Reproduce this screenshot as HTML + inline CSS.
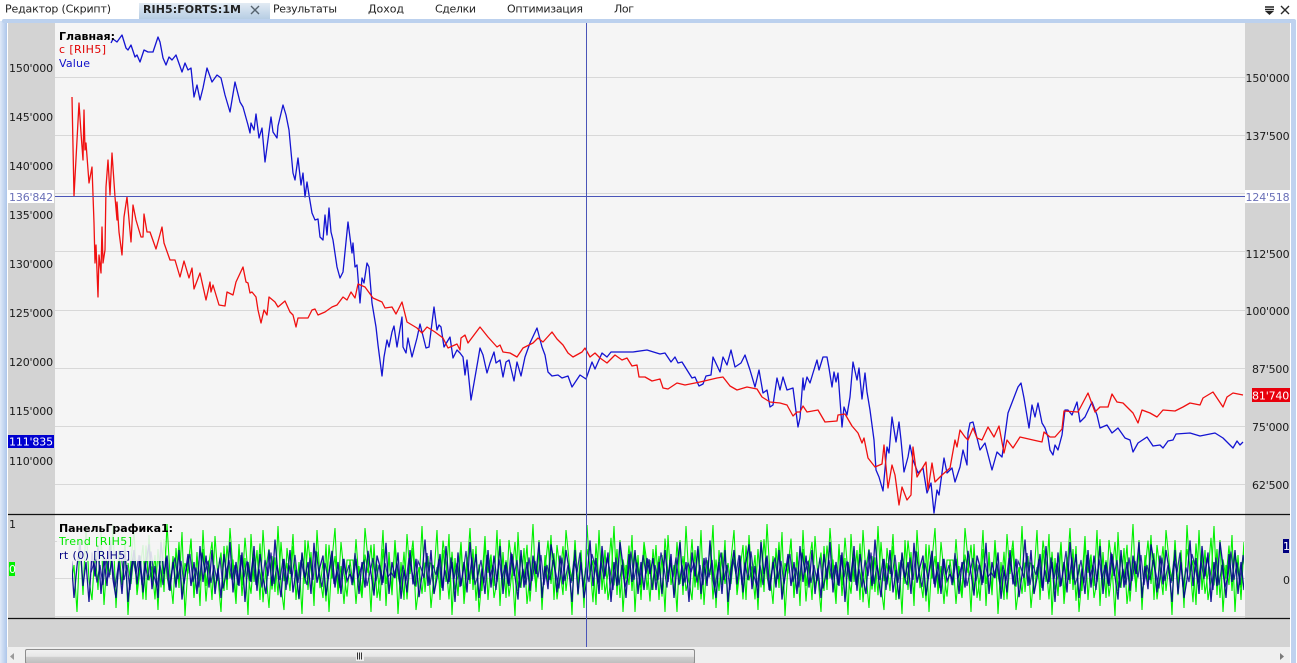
<!DOCTYPE html>
<html><head><meta charset="utf-8"><style>
html,body{margin:0;padding:0;background:#fff;width:1297px;height:663px;overflow:hidden}
svg{display:block}
text{font-family:"DejaVu Sans","Liberation Sans",sans-serif;font-size:11px;fill:#1a1a1a}
.t{fill:#222}
.a{letter-spacing:-.15px}
</style></head><body>
<svg width="1297" height="663" viewBox="0 0 1297 663" xmlns="http://www.w3.org/2000/svg">
<defs>
<linearGradient id="tab" x1="0" y1="0" x2="0" y2="1"><stop offset="0" stop-color="#e2ebf4"/><stop offset="1" stop-color="#b4cbe2"/></linearGradient>
<linearGradient id="side" x1="0" y1="0" x2="1" y2="0"><stop offset="0" stop-color="#dfe9f8"/><stop offset="1" stop-color="#adc6ea"/></linearGradient>
<linearGradient id="thumb" x1="0" y1="0" x2="0" y2="1"><stop offset="0" stop-color="#f2f2f2"/><stop offset=".5" stop-color="#e6e6e6"/><stop offset=".55" stop-color="#cfcfcf"/><stop offset="1" stop-color="#bdbdbd"/></linearGradient>
<clipPath id="lo"><rect x="72" y="516" width="1172" height="102"/></clipPath>
<polyline id="g" fill="none" vector-effect="non-scaling-stroke" points="0,560 3,590 6,545 9,600 12,555 15,612 18,535 21,585 24,565 27,612 30,540 33,595 36,526 39,580 42,600 45,550 48,590 51,530 54,605 57,560 60,575 63,525 66,608 69,550 72,585 75,540 78,615 81,560 84,530 87,595 90,570 93,545 96,600 99,535 102,582 105,555 108,610 111,540 114,592 117,524 120,575 123,604 126,548 129,588 132,532 135,616 138,565 141,540 144,598 147,552 150,606 153,530 156,586 159,560 162,600 165,536 168,578 171,612 174,546 177,590 180,528 183,570 186,604 189,544 192,596 195,558 198,615 201,534 204,582 207,550 210,600 213,530 216,574 219,608 222,556 225,592 228,526 231,586 234,610 237,548 240,574 243,534 246,600 249,562 252,614 255,540 258,590 261,552 264,606 267,530 270,578 273,598 276,544 279,612 282,560 285,528 288,594 291,566 294,604 297,560 300,560"/>
<polyline id="n" fill="none" vector-effect="non-scaling-stroke" points="0,575 3,555 6,595 9,560 12,600 15,545 18,585 21,550 24,605 27,565 30,535 33,590 36,560 39,610 42,548 45,578 48,540 51,600 54,555 57,590 60,533 63,582 66,605 69,560 72,600 75,545 78,610 81,570 84,545 87,588 90,552 93,598 96,560 99,538 102,594 105,565 108,605 111,535 114,575 117,552 120,596 123,560 126,592 129,545 132,607 135,578 138,550 141,590 144,560 147,600 150,540 153,585 156,552 159,592 162,545 165,600 168,568 171,605 174,550 177,582 180,535 183,598 186,560 189,590 192,548 195,610 198,560 201,585 204,540 207,596 210,550 213,580 216,600 219,545 222,590 225,532 228,576 231,604 234,556 237,588 240,545 243,598 246,570 249,606 252,548 255,580 258,560 261,600 264,536 267,586 270,566 273,552 276,602 279,574 282,546 285,592 288,560 291,600 294,556 297,584 300,575"/>
</defs>

<rect width="1297" height="663" fill="#fff"/>
<!-- tab bar -->
<rect x="139" y="3" width="131" height="17" fill="url(#tab)"/>
<text x="5" y="12.5" class="t" textLength="106" lengthAdjust="spacing">Редактор (Скрипт)</text>
<text x="143" y="13" style="font-weight:bold" class="t" textLength="98" lengthAdjust="spacing">RIH5:FORTS:1M</text>
<path d="M251 6l8 8M259 6l-8 8" stroke="#56636f" stroke-width="1.4" fill="none"/>
<text x="273" y="12.5" class="t" textLength="64" lengthAdjust="spacing">Результаты</text>
<text x="368" y="12.5" class="t" textLength="36" lengthAdjust="spacing">Доход</text>
<text x="435" y="12.5" class="t" textLength="41" lengthAdjust="spacing">Сделки</text>
<text x="507" y="12.5" class="t" textLength="76" lengthAdjust="spacing">Оптимизация</text>
<text x="614" y="12.5" class="t" textLength="20" lengthAdjust="spacing">Лог</text>
<path d="M1265 7h9M1265 9.500h9" stroke="#222" stroke-width="1.500"/><path d="M1265 11h9l-4.500 4z" fill="#222"/>
<path d="M1281 6l8 8M1289 6l-8 8" stroke="#2a2a2a" stroke-width="1.400" fill="none"/>

<!-- frame -->
<rect x="0" y="19" width="1297" height="644" rx="5" fill="#fff"/>
<rect x="0" y="21" width="7" height="642" fill="url(#side)"/>
<rect x="2" y="19" width="1294" height="4" rx="2" fill="#bcd1ee"/>
<rect x="1291" y="20" width="5" height="643" fill="#bfd2ef"/>
<rect x="7" y="23" width="1284" height="640" fill="#fff"/>

<!-- panels -->
<rect x="8" y="23" width="1282" height="624" fill="#d3d3d3"/>
<rect x="55" y="23" width="1190" height="595" fill="#f5f5f5"/>
<path d="M55 77.500H1245M55 135.500H1245M55 193.500H1245M55 251.500H1245M55 310.500H1245M55 368.500H1245M55 426.500H1245M55 484.500H1245M55 541.500H1245M55 578.500H1245M55 616.500H1245" stroke="#d8d8d8" stroke-width="1"/>

<!-- lower pane noise -->
<g clip-path="url(#lo)">
<g stroke="#00f000" stroke-width="1.100">
<use href="#g" transform="translate(50,0)"/><use href="#g" transform="translate(650,570) scale(-1,0)" opacity="0"/><use href="#g" transform="translate(650,0) scale(-1,1)"/><use href="#g" transform="translate(650,0)"/><use href="#g" transform="translate(1250,0) scale(-1,1)"/>
<use href="#g" transform="translate(128,171) scale(1,.7)"/><use href="#g" transform="translate(728,171) scale(-1,.7)"/><use href="#g" transform="translate(728,171) scale(1,.7)"/><use href="#g" transform="translate(1328,171) scale(-1,.7)"/>
</g>
<g stroke="#00008b" stroke-width="1.300" stroke-opacity=".9">
<use href="#n" transform="translate(50,114) scale(1,.8)"/><use href="#n" transform="translate(650,114) scale(-1,.8)"/><use href="#n" transform="translate(650,114) scale(1,.8)"/><use href="#n" transform="translate(1250,114) scale(-1,.8)"/>
</g>
<g stroke="#00008b" stroke-width="1.200" stroke-opacity=".8">
<use href="#n" transform="translate(91,285) scale(1,.5)"/><use href="#n" transform="translate(691,285) scale(-1,.5)"/><use href="#n" transform="translate(691,285) scale(1,.5)"/><use href="#n" transform="translate(1291,285) scale(-1,.5)"/>
</g>
</g>
<rect x="57" y="521" width="108" height="40" fill="#f5f5f5" fill-opacity=".88"/>

<!-- main lines -->
<polyline fill="none" stroke="#1414d2" stroke-width="1.300" stroke-linejoin="round" points="111,43 113,39 117,42 122,35 126,48 128,50 131,45 135,57 137,55 140,62 144,50 148,52 153,52 158,37 160,42 163,58 166,65 169,57 172,60 176,55 182,72 185,63 188,70 191,68 194,97 197,85 200,100 203,88 207,68 212,82 217,75 221,78 225,95 230,112 235,82 240,102 243,107 248,125 250,133 251,123 254,130 256,114 259,138 262,128 265,162 267,147 271,117 273,132 277,138 278,126 283,105 286,115 289,130 293,173 295,180 298,158 301,185 303,173 305,197 307,182 309,195 312,213 315,220 318,219 320,237 323,240 325,215 327,235 329,208 331,232 333,240 337,267 340,278 343,272 348,222 352,253 353,243 355,267 357,265 360,303 362,278 364,283 367,263 369,267 372,303 376,327 378,345 382,376 384,357 387,340 389,347 392,332 394,326 397,347 402,317 403,347 406,353 408,338 412,357 417,338 420,324 426,348 429,347 434,307 437,330 439,325 441,327 444,347 450,337 453,358 457,350 460,353 463,357 465,375 467,360 471,400 474,383 478,360 480,348 483,355 487,373 490,363 494,352 496,363 500,360 503,377 506,362 509,360 514,381 517,362 521,376 525,357 530,343 537,328 542,347 545,355 548,372 552,376 558,375 562,378 568,376 572,387 580,375 586,379 592,362 595,369 602,353 607,357 611,352 633,352 647,350 660,354 665,353 671,362 675,357 678,363 682,362 692,378 695,377 699,386 703,384 706,376 711,375 713,357 720,372 723,357 727,365 731,350 735,367 741,363 745,355 750,370 755,387 759,370 763,393 767,390 770,407 773,405 777,378 780,390 783,377 787,390 793,388 798,427 800,418 803,378 804,390 807,377 810,383 813,373 817,360 819,370 823,357 827,357 829,368 832,387 834,372 836,382 838,373 840,400 842,427 844,407 847,415 850,397 853,362 857,380 859,368 862,399 865,373 867,392 870,410 874,440 876,470 879,477 883,491 887,447 889,453 892,417 896,442 899,422 901,440 904,472 908,457 910,445 913,460 918,473 923,468 927,493 931,483 934,513 937,490 939,495 944,458 947,473 952,468 955,482 960,467 963,450 967,465 968,433 970,423 973,422 980,450 985,443 992,470 997,452 1002,457 1008,413 1013,400 1018,387 1021,383 1024,398 1029,428 1032,405 1035,417 1038,403 1042,423 1045,428 1048,437 1050,450 1053,455 1055,445 1058,450 1062,435 1065,410 1068,410 1072,415 1077,402 1080,422 1085,417 1092,402 1097,415 1100,428 1107,425 1112,433 1118,428 1125,438 1130,440 1133,452 1138,443 1147,437 1153,446 1160,445 1163,448 1168,441 1173,440 1176,434 1190,433 1200,436 1215,433 1223,438 1233,448 1237,441 1240,445 1243,442"/>
<polyline fill="none" stroke="#f01010" stroke-width="1.300" stroke-linejoin="round" points="72,97 74,196 79,103 81,133 83,160 84,110 85,150 86,143 89,183 92,167 94,223 95,263 96,245 98,297 99,255 101,273 102,227 103,263 105,250 106,187 108,160 110,195 112,153 115,197 117,220 117,202 119,232 122,255 124,217 127,197 131,242 133,205 136,220 141,237 143,237 144,214 147,232 150,232 156,249 162,227 164,243 170,260 175,260 180,277 184,261 189,278 192,268 194,289 200,273 206,300 210,282 211,292 213,285 219,305 225,306 227,292 233,295 236,282 243,267 246,282 248,283 250,293 252,292 256,297 258,310 261,323 264,310 267,315 269,297 275,302 278,307 285,301 290,312 293,315 296,327 298,318 308,318 312,310 315,309 318,315 325,312 332,307 337,305 343,297 347,300 351,292 355,298 358,284 365,287 373,298 382,302 385,308 392,307 396,314 402,302 407,322 417,328 422,333 427,327 435,332 443,338 448,348 457,344 460,350 461,338 465,335 468,343 480,327 488,337 497,347 500,345 503,352 510,353 517,357 523,348 533,343 538,338 543,342 552,332 557,339 563,345 568,353 573,357 582,352 585,348 590,357 595,353 600,358 607,363 615,355 622,360 627,358 632,366 637,365 639,377 645,377 652,381 660,379 663,388 668,389 677,383 685,385 700,382 717,378 723,377 730,386 737,390 747,387 757,389 762,397 770,402 780,403 787,405 793,416 797,412 800,412 803,406 807,412 818,410 825,422 837,421 838,415 845,414 852,426 858,433 862,443 864,438 868,458 875,467 882,464 884,445 888,488 892,465 895,475 899,505 902,487 907,500 911,495 913,447 917,477 926,462 928,490 932,463 935,482 942,475 950,468 955,440 957,447 960,430 965,437 968,440 973,428 977,438 982,440 988,427 994,437 999,426 1004,453 1007,440 1013,448 1020,437 1033,440 1042,442 1044,432 1050,437 1055,437 1062,429 1064,411 1078,412 1088,393 1095,412 1100,407 1108,407 1112,394 1117,402 1123,403 1133,413 1138,423 1142,410 1150,413 1157,417 1163,410 1175,411 1183,407 1190,403 1200,405 1203,398 1213,392 1223,407 1227,397 1233,393 1243,395"/>

<!-- separators -->
<path d="M8 514.500H1290M8 618.500H1290" stroke="#111" stroke-width="1.200"/>

<!-- left axis -->
<g class="a">
<text x="9" y="72">150'000</text><text x="9" y="121">145'000</text><text x="9" y="170">140'000</text><text x="9" y="219">135'000</text><text x="9" y="268">130'000</text><text x="9" y="317">125'000</text><text x="9" y="366">120'000</text><text x="9" y="415">115'000</text><text x="9" y="465">110'000</text>
<!-- right axis -->
<text x="1245.500" y="82">150'000</text><text x="1245.500" y="140">137'500</text><text x="1245.500" y="258">112'500</text><text x="1245.500" y="315">100'000</text><text x="1252" y="373">87'500</text><text x="1252" y="431">75'000</text><text x="1252" y="489">62'500</text>
</g>
<rect x="8" y="190" width="46" height="13" fill="#fff"/>
<rect x="1245" y="190" width="45" height="13" fill="#fff"/>
<!-- crosshair -->
<path d="M55 196.500H1245M586.500 23V647" stroke="#4a55b8" stroke-width="1"/>
<g class="a">
<text x="9" y="201" style="fill:#6a70b8">136'842</text>
<text x="1245.500" y="201" style="fill:#6a70b8">124'518</text>
<rect x="8" y="435" width="46" height="13" fill="#0000d0"/><text x="9" y="445.500" style="fill:#fff">111'835</text>
<rect x="1252" y="388" width="38" height="14" fill="#e8000c"/><text x="1252" y="399.500" style="fill:#fff">81'740</text>
</g>
<text x="9" y="528">1</text>
<rect x="9" y="562" width="6" height="14" fill="#00f000"/><text x="9" y="573" style="fill:#fff">0</text>
<rect x="1283" y="539" width="6" height="14" fill="#000080"/><text x="1283" y="550" style="fill:#fff">1</text>
<text x="1283" y="584">0</text>

<!-- legends -->
<text x="59" y="40" style="font-weight:bold;fill:#000" textLength="56" lengthAdjust="spacing">Главная:</text>
<text x="59" y="53" style="fill:#e00000" textLength="47" lengthAdjust="spacing">c [RIH5]</text>
<text x="59" y="67" style="fill:#1010c8" textLength="31" lengthAdjust="spacing">Value</text>
<text x="59" y="532" style="font-weight:bold;fill:#000" textLength="114" lengthAdjust="spacing">ПанельГрафика1:</text>
<text x="59" y="545" style="fill:#00e800" textLength="73" lengthAdjust="spacing">Trend [RIH5]</text>
<text x="59" y="559" style="fill:#000080" textLength="71" lengthAdjust="spacing">rt (0) [RIH5]</text>

<!-- scrollbar -->
<rect x="7" y="647" width="1283" height="16" fill="#efefef"/>
<path d="M10 656.500l4-3.500v7z" fill="#9a9a9a"/>
<path d="M1284 656.500l-4-3.500v7z" fill="#7a7a7a"/>
<rect x="25.500" y="649.500" width="669" height="14" rx="1.500" fill="url(#thumb)" stroke="#8d8d8d"/>
<rect x="356" y="652" width="8" height="9" fill="#eee"/>
<path d="M357.500 652.500v7M359.500 652.500v7M361.500 652.500v7" stroke="#333" stroke-width="1"/>
</svg>
</body></html>
